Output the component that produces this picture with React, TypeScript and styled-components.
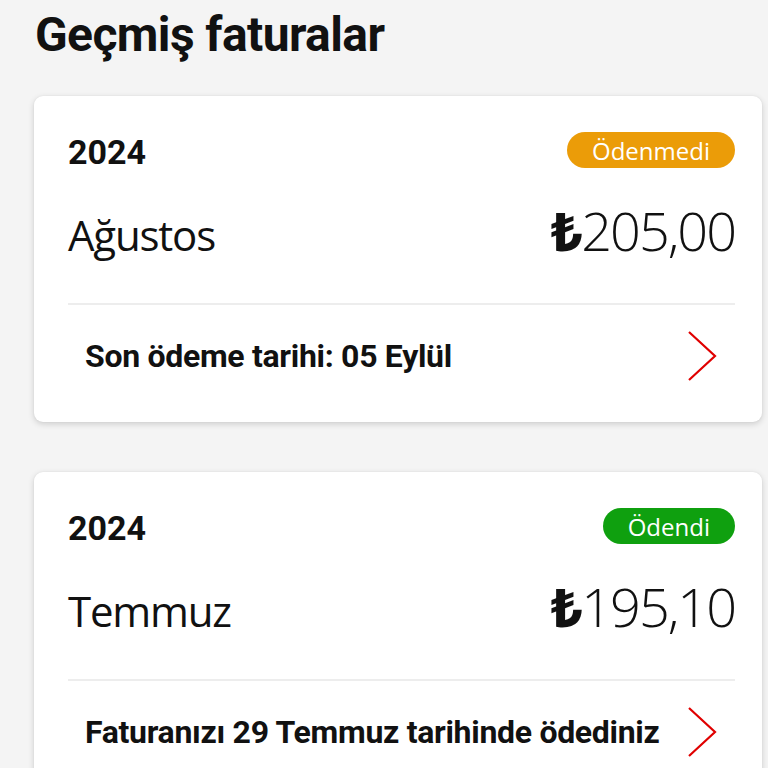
import React from "react";
import styled, { createGlobalStyle } from "styled-components";

const Global = createGlobalStyle`
  html, body { margin: 0; padding: 0; background: #f4f4f4; }
  body { font-family: Roboto, "Noto Sans", sans-serif; color: #111; }
`;

const Page = styled.div`
  width: 768px;
  height: 768px;
  overflow: hidden;
  box-sizing: border-box;
  padding: 8px 6px 0 34px;
  display: flex;
  flex-direction: column;
`;

const Title = styled.h1`
  margin: 0 0 0 1px;
  font-size: 48px;
  line-height: 54px;
  font-weight: 700;
  letter-spacing: -0.6px;
`;

const List = styled.div`
  margin-top: 34px;
  display: flex;
  flex-direction: column;
  gap: 50px;
`;

const Card = styled.section`
  background: #fff;
  border-radius: 9px;
  box-shadow: 0 2px 6px rgba(0, 0, 0, 0.16), 0 0 2px rgba(0, 0, 0, 0.06);
  padding: 36px 27px 0 34px;
  height: 326px;
  box-sizing: border-box;
  flex-shrink: 0;
`;

const TopRow = styled.div`
  display: flex;
  justify-content: space-between;
  align-items: center;
  height: 36px;
`;

const Year = styled.span`
  font-size: 34px;
  font-weight: 700;
  line-height: 36px;
  margin-top: 4px;
`;

const Badge = styled.span<{ $tone: "warn" | "ok" }>`
  height: 36px;
  border-radius: 18px;
  padding: 0 25px;
  display: inline-flex;
  align-items: center;
  color: #fff;
  font-size: 24px;
  font-family: "Open Sans", Roboto, sans-serif;
  background: ${(p) => (p.$tone === "warn" ? "#eb9c08" : "#0fa00f")};
`;

const MainRow = styled.div`
  display: flex;
  justify-content: space-between;
  align-items: baseline;
  margin-top: 34px;
  height: 56px;
  border-bottom: 2px solid #ededed;
  padding-bottom: 45px;
`;

const Month = styled.span`
  font-size: 42px;
  font-weight: 400;
  font-family: "Open Sans", Roboto, sans-serif;
  letter-spacing: -1.2px;
  line-height: 56px;
`;

const Amount = styled.span`
  font-size: 54px;
  font-weight: 300;
  font-family: "Open Sans", Roboto, sans-serif;
  letter-spacing: -2px;
  line-height: 56px;
`;

const Lira = styled.span`
  font-family: "Noto Sans", "DejaVu Sans", sans-serif;
  font-weight: 800;
  font-size: 54px;
  margin-right: 1px;
`;

const Footer = styled.div`
  display: flex;
  justify-content: space-between;
  align-items: center;
  padding: 27px 17px 0 17px;
  height: 48px;
`;

const FooterText = styled.span`
  font-size: 32px;
  font-weight: 700;
  letter-spacing: -0.3px;
`;

const Chevron = () => (
  <svg width="32" height="50" viewBox="0 0 32 50" fill="none">
    <path d="M3 1 L29 25 L3 49" stroke="#e00000" strokeWidth="2.2" strokeLinejoin="miter" />
  </svg>
);

type Bill = {
  year: string;
  status: string;
  tone: "warn" | "ok";
  month: string;
  amount: string;
  note: string;
};

const bills: Bill[] = [
  { year: "2024", status: "Ödenmedi", tone: "warn", month: "Ağustos", amount: "205,00", note: "Son ödeme tarihi: 05 Eylül" },
  { year: "2024", status: "Ödendi", tone: "ok", month: "Temmuz", amount: "195,10", note: "Faturanızı 29 Temmuz tarihinde ödediniz" },
];

export default function App() {
  return (
    <>
      <Global />
      <Page>
        <Title>Geçmiş faturalar</Title>
        <List>
          {bills.map((b) => (
            <Card key={b.month}>
              <TopRow>
                <Year>{b.year}</Year>
                <Badge $tone={b.tone}>{b.status}</Badge>
              </TopRow>
              <MainRow>
                <Month>{b.month}</Month>
                <Amount>
                  <Lira>₺</Lira>
                  {b.amount}
                </Amount>
              </MainRow>
              <Footer>
                <FooterText>{b.note}</FooterText>
                <Chevron />
              </Footer>
            </Card>
          ))}
        </List>
      </Page>
    </>
  );
}
